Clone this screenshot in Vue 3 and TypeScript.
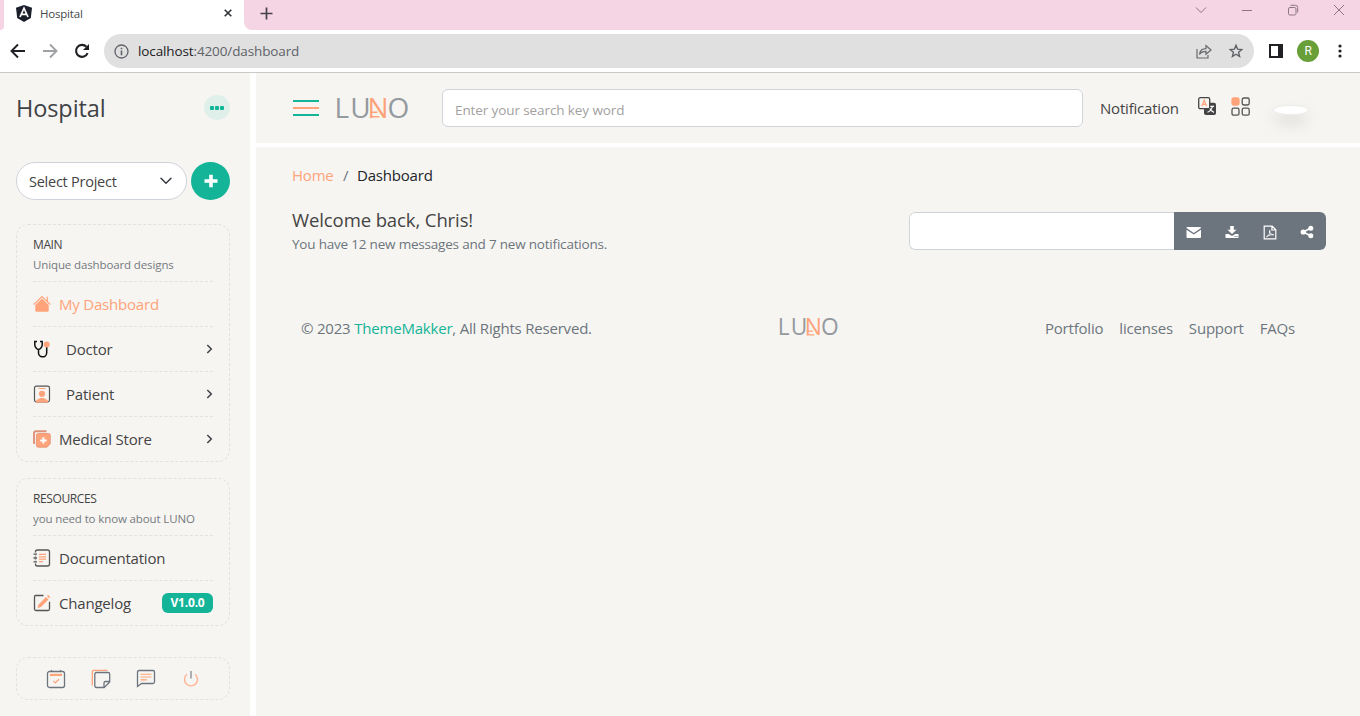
<script setup lang="ts">
interface MenuItem {
  id: string
  label: string
  active?: boolean
  arrow?: boolean
  wide?: boolean
  badge?: string
}
interface MenuGroup {
  id: string
  title: string
  hint: string
  items: MenuItem[]
}

const groups: MenuGroup[] = [
  {
    id: 'main',
    title: 'MAIN',
    hint: 'Unique dashboard designs',
    items: [
      { id: 'home', label: 'My Dashboard', active: true },
      { id: 'doctor', label: 'Doctor', arrow: true, wide: true },
      { id: 'patient', label: 'Patient', arrow: true, wide: true },
      { id: 'store', label: 'Medical Store', arrow: true },
    ],
  },
  {
    id: 'resources',
    title: 'RESOURCES',
    hint: 'you need to know about LUNO',
    items: [
      { id: 'docs', label: 'Documentation' },
      { id: 'log', label: 'Changelog', badge: 'V1.0.0' },
    ],
  },
]
const links: string[] = ['Portfolio', 'licenses', 'Support', 'FAQs']
</script>

<template>
  <div class="window">
    <div class="tabstrip">
      <div class="tab-prev"><i></i></div>
      <div class="tab">
        <svg class="fav" width="16" height="17" viewBox="0 0 16 17">
          <path d="M8 0 16 2.8 14.8 13 8 17 1.2 13 0 2.8Z" fill="#1b1f2b" />
          <path d="M4 12 8 3.2 12 12M5.8 9.3h4.4" fill="none" stroke="#fff" stroke-width="1.7" />
        </svg>
        <span class="tab-title">Hospital</span>
        <svg class="tab-x" width="8" height="8" viewBox="0 0 8 8"><path d="M.7.7l6.6 6.6M7.3.7.7 7.3" stroke="#303236" stroke-width="1.6" /></svg>
      </div>
      <div class="tab-rest">
        <svg width="13" height="13" viewBox="0 0 13 13"><path d="M6.5.5v12M.5 6.5h12" stroke="#45404a" stroke-width="1.7" /></svg>
        <div class="controls">
          <svg width="12" height="12" viewBox="0 0 12 12"><path d="M1 3.5l5 5 5-5" /></svg>
          <svg width="12" height="12" viewBox="0 0 12 12"><path d="M1 6.5h10" /></svg>
          <svg width="12" height="12" viewBox="0 0 12 12"><rect x="1.5" y="3.5" width="7.5" height="7.5" rx="1.5" /><path d="M3.5 1.3h5a2.2 2.2 0 0 1 2.2 2.2v5" /></svg>
          <svg width="12" height="12" viewBox="0 0 12 12"><path d="M1 1l10 10M11 1 1 11" /></svg>
        </div>
      </div>
    </div>

    <div class="toolbar">
      <div class="nav">
        <svg width="16" height="16" viewBox="0 0 16 16"><path d="M15 8H2M8 1.5 1.5 8 8 14.5" stroke="#202124" /></svg>
        <svg width="16" height="16" viewBox="0 0 16 16"><path d="M1 8h13M8 1.5 14.500 8 8 14.500" stroke="#a0a1a3" /></svg>
        <svg width="16" height="16" viewBox="0 0 16 16"><path d="M13.600 10.200A6 6 0 1 1 12.400 3.700" stroke="#202124" stroke-width="2.1" /><path d="M15 1v6H9Z" fill="#202124" stroke="none" /></svg>
      </div>
      <div class="address">
        <svg width="15" height="15" viewBox="0 0 15 15"><circle cx="7.500" cy="7.500" r="6.500" fill="none" stroke="#5f6368" stroke-width="1.300" /><path d="M7.500 6.500v4.700M7.500 3.700v1.600" stroke="#5f6368" stroke-width="1.600" /></svg>
        <span class="url"><b>localhost</b>:4200/dashboard</span>
        <svg class="share" width="16" height="15" viewBox="0 0 16 15"><path d="M1 5v9h11v-3M3.500 10.500C4 6.500 6.500 4.700 10 4.700V1.500L15 6l-5 4.300V7.400C7 7.400 5 8.300 3.500 10.500Z" fill="none" stroke="#65686c" stroke-width="1.200" /></svg>
        <svg width="14" height="14" viewBox="0 0 14 14"><path d="M7 1.300 8.600 5.200l4.200.4-3.200 2.700 1 4.100L7 10.200l-3.600 2.200 1-4.100L1.200 5.600l4.200-.4Z" fill="none" stroke="#5f6368" stroke-width="1.400" /></svg>
      </div>
      <svg class="panel" width="14" height="14" viewBox="0 0 14 14"><path d="M1 1h12v12H1Z" fill="#fff" stroke="#202124" stroke-width="2" /><path d="M9 1h4v12H9Z" fill="#202124" /></svg>
      <span class="avatar">R</span>
      <svg width="4" height="14" viewBox="0 0 4 14" fill="#202124"><circle cx="2" cy="2" r="1.600" /><circle cx="2" cy="7" r="1.600" /><circle cx="2" cy="12" r="1.600" /></svg>
    </div>

    <div class="app">
      <aside class="sidebar">
        <div class="brand">
          <h4>Hospital</h4>
          <button class="dots"><i></i><i></i><i></i></button>
        </div>
        <div class="project">
          <div class="select">
            <span>Select Project</span>
            <svg width="12" height="8" viewBox="0 0 12 8"><path d="M1 1.200l5 5 5-5" fill="none" stroke="#343a40" stroke-width="1.500" stroke-linecap="round" /></svg>
          </div>
          <button class="add"><svg width="14" height="14" viewBox="0 0 14 14"><path d="M7 .7v12.600M.5 7h13" stroke="#fff" stroke-width="3.600" /></svg></button>
        </div>

        <section v-for="g in groups" :key="g.id" class="card">
          <header>
            <div class="card-title">{{ g.title }}</div>
            <div class="card-hint" :class="'hint-' + g.id">{{ g.hint }}</div>
          </header>
          <div v-for="it in g.items" :key="it.id" class="item" :class="['item-' + it.id, { active: it.active, wide: it.wide }]">
            <svg class="ico" width="18" height="18" viewBox="0 0 18 18">
              <g v-if="it.id === 'home'" fill="#ffa37a">
                <path d="M9 3.600 15.700 10v5.200q0 1.600-1.600 1.600H3.900q-1.600 0-1.600-1.600V10Z" />
                <path d="M1 9.200 9 1.500l8 7.700M14.300 2v4.500" fill="none" stroke="#ffa37a" stroke-width="1.200" stroke-linecap="round" />
              </g>
              <g v-else-if="it.id === 'doctor'" fill="none" stroke="#111" stroke-width="1.500">
                <path d="M4 1.500H1.800v3.200C1.800 7 4 9.500 5.500 9.500S9.200 7 9.200 4.700V1.500H7M5.500 9.500v3a4 4 0 0 0 8.200.5V7" />
                <circle cx="13.700" cy="4.600" r="3" fill="#ffa37a" stroke="none" />
              </g>
              <g v-else-if="it.id === 'patient'" fill="#ffa37a">
                <rect x="1.500" y="1.200" width="15" height="15.600" rx="1.800" fill="none" stroke="#555" stroke-width="1.200" />
                <path d="M5.500 3.500h7" stroke="#ffa37a" />
                <circle cx="9" cy="8.800" r="3.100" />
                <path d="M2.500 17.500c1-6 12-6 13 0Z" />
              </g>
              <g v-else-if="it.id === 'store'">
                <path d="M1 14V3.300Q1 1.200 3 1.200h10.500" fill="none" stroke="#de927a" stroke-width="1.900" />
                <path d="M5.200 3.500h10.300q1.800 0 1.800 1.800v8.500L14 17.200H5.200q-1.800 0-1.800-1.800V5.300q0-1.800 1.800-1.800Z" fill="#ffa37a" stroke="#e49070" stroke-width=".8" />
                <path d="M10.400 7.200v6.400M7.200 10.400h6.400" stroke="#fff" stroke-width="2" />
              </g>
              <g v-else-if="it.id === 'docs'" fill="none" stroke="#555" stroke-width="1.300">
                <path d="M2.500 3.500V2.700Q2.500 1 4.200 1h10.300q2 0 2 2v12q0 2-2 2H4.200q-1.700 0-1.700-1.700v-.8M.5 5.100h3.500M.5 9h3.500M.5 12.800h3.500M2.500 6.700v.8M2.500 10.500v.8" />
                <path d="M6 5.300h7M6 7.800h7M6 10.200h7M6 12.700h4" stroke="#ffa37a" />
              </g>
              <g v-else fill="none" stroke="#555" stroke-width="1.300">
                <path d="M10.500 1.500h-8Q1.500 1.500 1.500 3v12q0 1.500 1.500 1.500h12q1.500 0 1.500-1.500V7.700" />
                <path d="M4.500 14l1-3.600L13 3l2.500 2.500L8 13ZM14 2l1-1.200 2.300 2.400-1.100 1Z" fill="#ffa37a" stroke="none" />
              </g>
            </svg>
            <span class="label">{{ it.label }}</span>
            <svg v-if="it.arrow" class="chev" width="7" height="10" viewBox="0 0 7 10"><path d="M1.300 1l4 4-4 4" fill="none" stroke="#3f4347" stroke-width="1.500" /></svg>
            <span v-if="it.badge" class="badge">{{ it.badge }}</span>
          </div>
        </section>

        <div class="quick">
          <svg width="20" height="20" viewBox="0 0 20 20" fill="none" stroke="#6c757d" stroke-width="1.300">
            <rect x="1.500" y="2.500" width="17" height="16" rx="2" /><path d="M5.500 1v1.500M14.500 1v1.500" /><path d="M4 5.900h12" stroke="#ffa37a" stroke-width="2.200" /><path d="M7.300 11.900l2 2 3.700-3.700" stroke="#ffa37a" />
          </svg>
          <svg width="20" height="20" viewBox="0 0 20 20" fill="none" stroke="#6c757d" stroke-width="1.300">
            <path d="M1.300 16.500V3Q1.300 1.300 3 1.300h13.500" stroke="#ffa37a" /><path d="M5.500 3.500H17q1.700 0 1.700 1.700V13l-5.500 5.500H5.500q-1.700 0-1.700-1.700V5.200q0-1.700 1.700-1.700ZM13 18v-4q0-1.500 1.500-1.500h4" />
          </svg>
          <svg width="20" height="20" viewBox="0 0 20 20" fill="none" stroke="#6c757d" stroke-width="1.300">
            <path d="M3 1.500h14q1.500 0 1.500 1.500v10q0 1.500-1.500 1.500H5.500l-4 3V3Q1.500 1.500 3 1.500Z" /><path d="M4.500 5.200h11M4.500 8h11M4.500 10.900h6.500" stroke="#ffa37a" stroke-width="1.100" />
          </svg>
          <svg width="20" height="20" viewBox="0 0 20 20" fill="none" stroke="#ffb394" stroke-width="1.400">
            <path d="M6 5.300a6.500 6.500 0 1 0 8 0" /><path d="M10 2v7.500" stroke="#979ba0" stroke-width="1.600" />
          </svg>
        </div>
      </aside>

      <div class="content">
        <div class="topbar">
          <div class="burger"><i></i><i></i><i></i></div>
          <svg class="logo" width="75" height="24" viewBox="0 0 75 24">
            <text x="-1.500 14.300 51.600" y="21.500" fill="#949a9f">LUO</text>
            <text x="31.600" y="21.500" fill="#ffa37a">N</text>
            <path d="M34 16.200h7.500M34 20.700h9.500" stroke="#ffa37a" stroke-width="1.500" />
          </svg>
          <div class="search">Enter your search key word</div>
          <span class="notif">Notification</span>
          <svg class="lang" width="18" height="18" viewBox="0 0 18 18">
            <path d="M7.500 5.800H16q2 0 2 2V16q0 2-2 2H8q-2 0-2-2v-4Z" fill="#444" />
            <path d="M10 9.300h6M14.500 9q-1 5-5 6.200M11.500 11q1.500 3.500 4.500 4.300" stroke="#fff" stroke-width="1.200" fill="none" />
            <rect x=".7" y=".7" width="11" height="11" rx="1.500" fill="#f7f5f2" stroke="#444" stroke-width="1.300" />
            <path d="M3.800 9.200 6.200 3.200 8.600 9.200M4.700 7.300h3" stroke="#ffa37a" stroke-width="1.200" fill="none" />
          </svg>
          <svg class="grid" width="19" height="19" viewBox="0 0 19 19" fill="none" stroke="#555" stroke-width="1.300">
            <rect x="1" y="1" width="7" height="7" rx="1.700" fill="#ffa37a" stroke="#ffa37a" /><rect x="11.200" y="1" width="7" height="7" rx="1.700" /><rect x="1" y="11.200" width="7" height="7" rx="1.700" /><rect x="11.200" y="11.200" width="7" height="7" rx="1.700" />
          </svg>
          <span class="profile"></span>
        </div>

        <main class="main">
          <nav class="crumbs"><span class="home">Home</span><span class="sep">/</span><span class="here">Dashboard</span></nav>
          <div class="welcome">
            <div>
              <h1>Welcome back, Chris!</h1>
              <p>You have 12 new messages and 7 new notifications.</p>
            </div>
            <div class="group">
              <div class="field"></div>
              <div class="actions">
                <svg width="16" height="14" viewBox="0 0 16 14"><path d="M1.500 2h12.500q1 0 1 1L7.800 8 .5 3q0-1 1-1ZM.5 4.700l7.300 4.800L15 4.700V12q0 1-1 1H1.500q-1 0-1-1Z" fill="#fff" /></svg>
                <svg width="14" height="14" viewBox="0 0 14 14"><path d="M5.200 1h3.600v3.800h2.700L7 9 2.500 4.800h2.700ZM.5 9h3.300L7 11l3.200-2h3.300v4H.5Z" fill="#fff" /><path d="M9.500 11.500h1M11.500 11.500h1" stroke="#6c757d" /></svg>
                <svg width="14" height="15" viewBox="0 0 14 15" fill="none" stroke="#fff" stroke-width="1.200"><path d="M1.200 1.200h8l3.600 3.600v9H1.200ZM8.900 1.200V5h3.900" /><path d="M3.500 11.800c3-1 4-5 3.200-6.500-1 2 1.500 4.500 4 4.500-2-.5-5 .3-7.200 2Z" stroke-width=".9" /></svg>
                <svg width="14" height="14" viewBox="0 0 14 14" fill="#fff"><circle cx="3.200" cy="7" r="2.600" /><circle cx="10.800" cy="3.200" r="2.500" /><circle cx="10.800" cy="10.800" r="2.500" /><path d="M10.500 3.200 3.200 7l7.300 3.800" fill="none" stroke="#fff" stroke-width="1.600" /></svg>
              </div>
            </div>
          </div>
          <footer class="footer">
            <div class="copy">© 2023 <span>ThemeMakker</span>, All Rights Reserved.</div>
            <svg class="logo small" width="61" height="19.500" viewBox="0 0 75 24">
              <text x="-1.500 14.300 51.600" y="21.500" fill="#949a9f">LUO</text>
              <text x="31.600" y="21.500" fill="#ffa37a">N</text>
              <path d="M34 16.200h7.500M34 20.700h9.500" stroke="#ffa37a" stroke-width="1.500" />
            </svg>
            <div class="links"><span v-for="l in links" :key="l">{{ l }}</span></div>
          </footer>
        </main>
      </div>
    </div>
  </div>
</template>

<style>
body { overflow: hidden; background: #fff; }
</style>

<style scoped>
* { box-sizing: border-box; margin: 0; }
.window { width: 1360px; height: 716px; display: flex; flex-direction: column; font-family: "Open Sans", "Noto Sans", sans-serif; font-size: 15px; letter-spacing: -0.2px; color: #444; white-space: nowrap; overflow: hidden; }
svg { display: block; flex: none; }
button { border: 0; padding: 0; display: flex; align-items: center; justify-content: center; }

.tabstrip { height: 30px; display: flex; background: #fff; }
.tab-prev { width: 4px; background: #f5d4e3; border-bottom-right-radius: 6px; }
.tab { width: 240px; display: flex; align-items: center; padding: 0 12px 4px 12px; }
.tab-title { font-size: 11.5px; margin-left: 8px; flex: 1; color: #45474a; }
.tab-x { margin-right: 0; }
.tab-rest { flex: 1; display: flex; align-items: center; justify-content: space-between; padding: 0 15px 4px 16px; background: #f5d4e3; border-bottom-left-radius: 8px; }
.controls { display: flex; gap: 34px; margin-top: -6px; }
.controls svg { fill: none; stroke: #8d7682; stroke-width: 1; }

.toolbar { height: 43px; display: flex; align-items: center; background: #fff; border-bottom: 1px solid #c9c9c9; padding: 0 17px 0 10px; }
.nav { display: flex; gap: 16px; width: 94px; }
.nav svg { fill: none; stroke-width: 1.9; }
.address { width: 1150px; height: 34px; border-radius: 17px; background: #e0e0e0; display: flex; align-items: center; padding: 0 11px 0 10px; }
.url { flex: 1; margin-left: 9px; font-size: 13.5px; color: #5f6368; letter-spacing: -0.12px; padding-bottom: 1px; }
.url b { font-weight: 400; color: #202124; }
.share { margin-right: 17px; }
.panel { margin: 0 14px 0 15px; }
.avatar { width: 22px; height: 22px; border-radius: 50%; background: #689f38; color: #fff; font: 12px/22px Roboto, sans-serif; text-align: center; margin-right: 19px; }

.app { flex: 1; display: flex; gap: 6px; background: #fff; min-height: 0; }
.sidebar { width: 250px; background: #f7f5f2; padding: 20px 20px 0 16px; display: flex; flex-direction: column; }
.brand { display: flex; align-items: flex-start; justify-content: space-between; height: 69px; }
h4 { font-size: 23.5px; line-height: 31px; font-weight: 400; color: #3f4246; letter-spacing: -0.1px; }
.dots { width: 26px; height: 25px; border-radius: 50%; background: #dff0ea; gap: 1px; margin-top: 2px; }
.dots i { width: 4px; height: 4px; border-radius: 1px; background: #11b598; }
.project { display: flex; justify-content: space-between; height: 38px; margin-bottom: 24px; }
.select { width: 171px; border: 1px solid #ced4da; border-radius: 19px; background: #fff; display: flex; align-items: center; justify-content: space-between; padding: 0 14px 0 12px; font-size: 14.5px; letter-spacing: -0.25px; }
.add { width: 39px; height: 38px; border-radius: 50%; background: #13b497; }
.card { border: 1px dashed #e3e1dd; border-radius: 12px; padding: 0 16px; margin-bottom: 16px; }
.card header { height: 56px; padding-top: 12px; }
.card-title { font-size: 12px; line-height: 16px; letter-spacing: -0.4px; }
.card-hint { font-size: 11.500px; line-height: 16px; margin-top: 4px; color: #747a80; letter-spacing: -0.12px; }
.item { height: 45px; border-top: 1px dashed #e3e1dd; display: flex; align-items: center; }
.label { margin-left: 8px; flex: 1; line-height: 20px; }
.wide .label { margin-left: 15px; }
.active .label { color: #ffa37a; }
.badge { width: 51px; height: 20px; border-radius: 6px; background: #13b497; color: #fff; font-size: 12px; font-weight: 700; line-height: 20px; text-align: center; }
.quick { margin-top: 15px; height: 43px; border: 1px dashed #e3e1dd; border-radius: 12px; display: flex; align-items: center; justify-content: space-between; padding: 0 28px 0 29px; }

.content { flex: 1; display: flex; flex-direction: column; gap: 4px; }
.topbar { height: 70px; background: #f7f5f2; display: flex; align-items: center; padding-left: 37px; }
.burger { width: 26px; height: 16px; display: flex; flex-direction: column; justify-content: space-between; }
.burger i { height: 2px; background: #13b497; }
.burger i:nth-child(2) { background: #ffa37a; }
.logo { margin-left: 17px; }
.logo text { font-family: "Open Sans", sans-serif; font-size: 28px; letter-spacing: 0; }
.search { margin-left: 31px; width: 641px; height: 38px; border: 1px solid #ced4da; border-radius: 6px; background: #fff; padding: 3px 12px 0; line-height: 35px; font-size: 13.500px; color: #a2a19f; letter-spacing: -0.1px; }
.notif { width: 82px; margin-left: 17px; }
.lang { margin: -4px 0 0 16px; }
.grid { margin: -4px 0 0 15px; }
.profile { width: 36px; height: 10px; margin: 4px 0 0 23px; border: 1px solid #eeecea; border-radius: 50%; background: #fff; box-shadow: 0 8px 16px rgba(0, 0, 0, 0.13); }

.main { flex: 1; background: #f7f5f2; padding: 18px 34px 0 36px; }
.crumbs { display: flex; line-height: 21px; }
.home { color: #ffa37a; width: 43px; }
.sep { color: #6c757d; margin: 0 8px; width: 6px; }
.here { color: #212529; }
.welcome { display: flex; justify-content: space-between; margin-top: 22px; }
h1 { font-size: 18.500px; line-height: 24px; font-weight: 400; letter-spacing: -0.1px; }
p { font-size: 13.500px; line-height: 20px; margin-top: 2px; color: #6c757d; }
.group { width: 417px; height: 38px; margin-top: 4px; display: flex; border-radius: 6px; overflow: hidden; }
.field { flex: 1; background: #fff; border: 1px solid #ced4da; border-right: 0; border-radius: 6px 0 0 6px; }
.actions { width: 152px; background: #6c757d; display: flex; align-items: center; justify-content: space-between; padding: 2px 12px 0; }
.footer { display: grid; grid-template-columns: 478px 1fr auto; align-items: center; margin-top: 60px; height: 28px; padding: 0 31px 0 9px; color: #6c757d; }
.copy span { color: #13b497; }
.small { margin-left: 0; }
.links { display: flex; gap: 16px; }
</style>
